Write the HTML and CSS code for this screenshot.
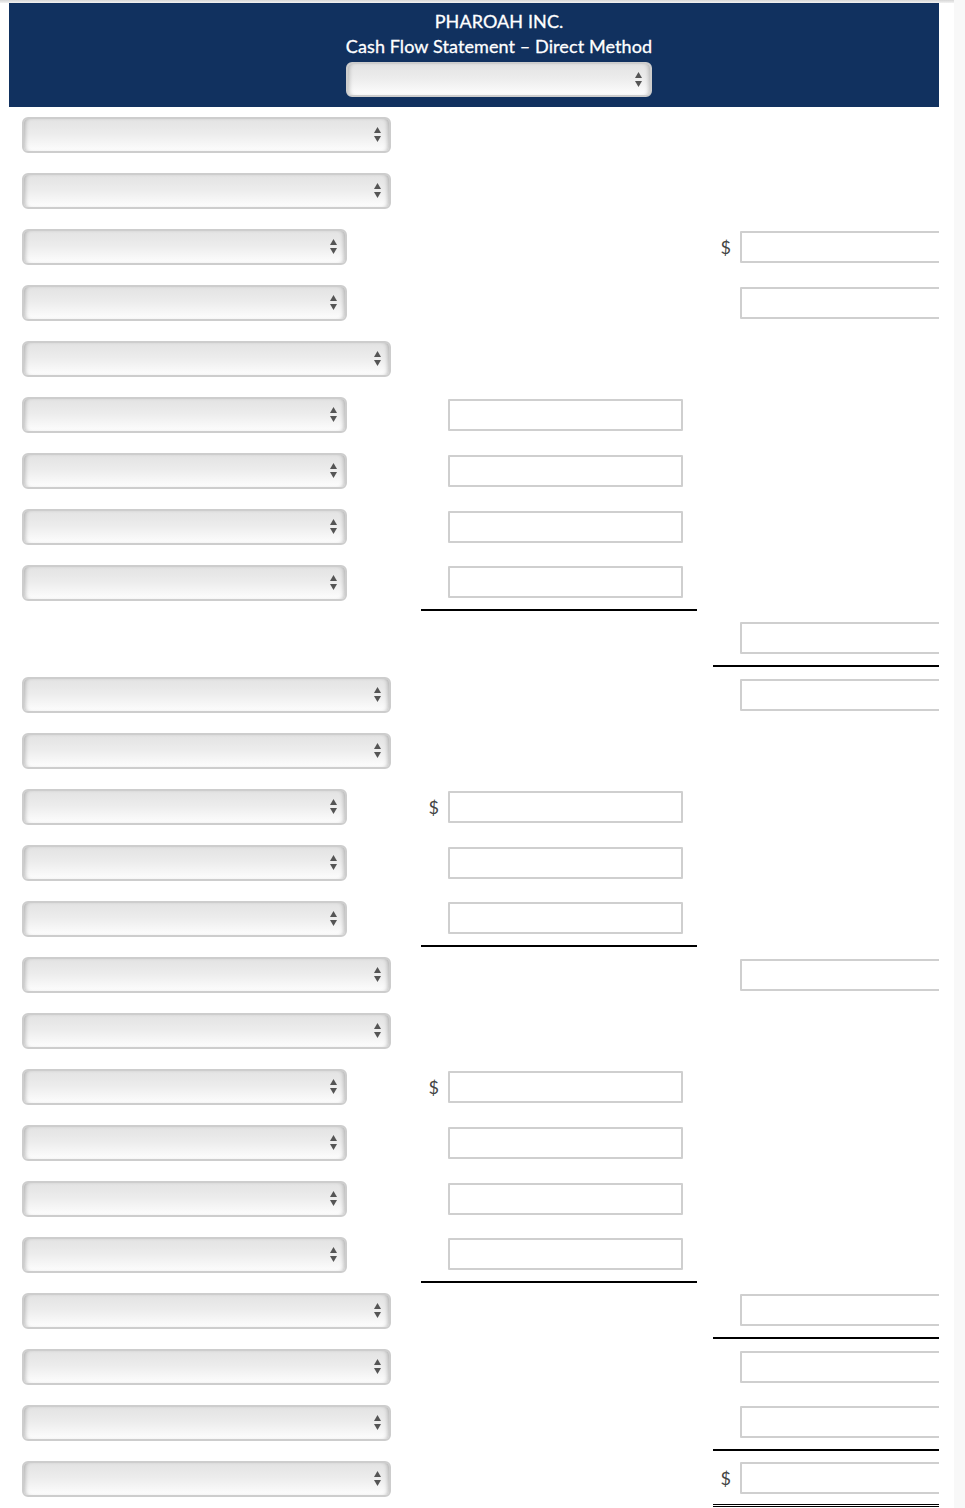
FILE: index.html
```html
<!DOCTYPE html>
<html>
<head>
	<title>Pharoah Inc. - Cash Flow Statement</title>
	<link rel="stylesheet" href="styles.css">
</head>
<body>
	<div class="shade"></div>

	<div class="sheet">

		<div class="head">
			<div class="title">PHAROAH INC.</div>
			<div class="title">Cash Flow Statement &ndash; Direct Method</div>
			<span class="pick pick-head">
				<select></select>
				<svg class="arrows" viewBox="0 0 7 15"><polygon points="0,6 3.5,0 7,6"/><polygon points="0,9 7,9 3.5,15"/></svg>
			</span>
		</div>

		<!-- operating activities -->
		<div class="row">
			<div class="lab"><span class="pick pick-long"><select></select><svg class="arrows" viewBox="0 0 7 15"><polygon points="0,6 3.5,0 7,6"/><polygon points="0,9 7,9 3.5,15"/></svg></span></div>
			<div class="mid"></div><div></div><div class="right"></div>
		</div>
		<div class="row">
			<div class="lab"><span class="pick pick-long"><select></select><svg class="arrows" viewBox="0 0 7 15"><polygon points="0,6 3.5,0 7,6"/><polygon points="0,9 7,9 3.5,15"/></svg></span></div>
			<div class="mid"></div><div></div><div class="right"></div>
		</div>
		<div class="row">
			<div class="lab"><span class="pick pick-short"><select></select><svg class="arrows" viewBox="0 0 7 15"><polygon points="0,6 3.5,0 7,6"/><polygon points="0,9 7,9 3.5,15"/></svg></span></div>
			<div class="mid"></div><div></div>
			<div class="right"><span class="cur">$</span><input type="text"></div>
		</div>
		<div class="row">
			<div class="lab"><span class="pick pick-short"><select></select><svg class="arrows" viewBox="0 0 7 15"><polygon points="0,6 3.5,0 7,6"/><polygon points="0,9 7,9 3.5,15"/></svg></span></div>
			<div class="mid"></div><div></div>
			<div class="right"><span class="cur"></span><input type="text"></div>
		</div>
		<div class="row">
			<div class="lab"><span class="pick pick-long"><select></select><svg class="arrows" viewBox="0 0 7 15"><polygon points="0,6 3.5,0 7,6"/><polygon points="0,9 7,9 3.5,15"/></svg></span></div>
			<div class="mid"></div><div></div><div class="right"></div>
		</div>
		<div class="row">
			<div class="lab"><span class="pick pick-short"><select></select><svg class="arrows" viewBox="0 0 7 15"><polygon points="0,6 3.5,0 7,6"/><polygon points="0,9 7,9 3.5,15"/></svg></span></div>
			<div class="mid"><span class="cur"></span><input type="text"></div><div></div><div class="right"></div>
		</div>
		<div class="row">
			<div class="lab"><span class="pick pick-short"><select></select><svg class="arrows" viewBox="0 0 7 15"><polygon points="0,6 3.5,0 7,6"/><polygon points="0,9 7,9 3.5,15"/></svg></span></div>
			<div class="mid"><span class="cur"></span><input type="text"></div><div></div><div class="right"></div>
		</div>
		<div class="row">
			<div class="lab"><span class="pick pick-short"><select></select><svg class="arrows" viewBox="0 0 7 15"><polygon points="0,6 3.5,0 7,6"/><polygon points="0,9 7,9 3.5,15"/></svg></span></div>
			<div class="mid"><span class="cur"></span><input type="text"></div><div></div><div class="right"></div>
		</div>
		<div class="row">
			<div class="lab"><span class="pick pick-short"><select></select><svg class="arrows" viewBox="0 0 7 15"><polygon points="0,6 3.5,0 7,6"/><polygon points="0,9 7,9 3.5,15"/></svg></span></div>
			<div class="mid rule"><span class="cur"></span><input type="text"></div><div></div><div class="right"></div>
		</div>
		<div class="row">
			<div class="lab"></div>
			<div class="mid"></div><div></div>
			<div class="right rule"><span class="cur"></span><input type="text"></div>
		</div>
		<div class="row">
			<div class="lab"><span class="pick pick-long"><select></select><svg class="arrows" viewBox="0 0 7 15"><polygon points="0,6 3.5,0 7,6"/><polygon points="0,9 7,9 3.5,15"/></svg></span></div>
			<div class="mid"></div><div></div>
			<div class="right"><span class="cur"></span><input type="text"></div>
		</div>

		<!-- investing activities -->
		<div class="row">
			<div class="lab"><span class="pick pick-long"><select></select><svg class="arrows" viewBox="0 0 7 15"><polygon points="0,6 3.5,0 7,6"/><polygon points="0,9 7,9 3.5,15"/></svg></span></div>
			<div class="mid"></div><div></div><div class="right"></div>
		</div>
		<div class="row">
			<div class="lab"><span class="pick pick-short"><select></select><svg class="arrows" viewBox="0 0 7 15"><polygon points="0,6 3.5,0 7,6"/><polygon points="0,9 7,9 3.5,15"/></svg></span></div>
			<div class="mid"><span class="cur">$</span><input type="text"></div><div></div><div class="right"></div>
		</div>
		<div class="row">
			<div class="lab"><span class="pick pick-short"><select></select><svg class="arrows" viewBox="0 0 7 15"><polygon points="0,6 3.5,0 7,6"/><polygon points="0,9 7,9 3.5,15"/></svg></span></div>
			<div class="mid"><span class="cur"></span><input type="text"></div><div></div><div class="right"></div>
		</div>
		<div class="row">
			<div class="lab"><span class="pick pick-short"><select></select><svg class="arrows" viewBox="0 0 7 15"><polygon points="0,6 3.5,0 7,6"/><polygon points="0,9 7,9 3.5,15"/></svg></span></div>
			<div class="mid rule"><span class="cur"></span><input type="text"></div><div></div><div class="right"></div>
		</div>
		<div class="row">
			<div class="lab"><span class="pick pick-long"><select></select><svg class="arrows" viewBox="0 0 7 15"><polygon points="0,6 3.5,0 7,6"/><polygon points="0,9 7,9 3.5,15"/></svg></span></div>
			<div class="mid"></div><div></div>
			<div class="right"><span class="cur"></span><input type="text"></div>
		</div>

		<!-- financing activities -->
		<div class="row">
			<div class="lab"><span class="pick pick-long"><select></select><svg class="arrows" viewBox="0 0 7 15"><polygon points="0,6 3.5,0 7,6"/><polygon points="0,9 7,9 3.5,15"/></svg></span></div>
			<div class="mid"></div><div></div><div class="right"></div>
		</div>
		<div class="row">
			<div class="lab"><span class="pick pick-short"><select></select><svg class="arrows" viewBox="0 0 7 15"><polygon points="0,6 3.5,0 7,6"/><polygon points="0,9 7,9 3.5,15"/></svg></span></div>
			<div class="mid"><span class="cur">$</span><input type="text"></div><div></div><div class="right"></div>
		</div>
		<div class="row">
			<div class="lab"><span class="pick pick-short"><select></select><svg class="arrows" viewBox="0 0 7 15"><polygon points="0,6 3.5,0 7,6"/><polygon points="0,9 7,9 3.5,15"/></svg></span></div>
			<div class="mid"><span class="cur"></span><input type="text"></div><div></div><div class="right"></div>
		</div>
		<div class="row">
			<div class="lab"><span class="pick pick-short"><select></select><svg class="arrows" viewBox="0 0 7 15"><polygon points="0,6 3.5,0 7,6"/><polygon points="0,9 7,9 3.5,15"/></svg></span></div>
			<div class="mid"><span class="cur"></span><input type="text"></div><div></div><div class="right"></div>
		</div>
		<div class="row">
			<div class="lab"><span class="pick pick-short"><select></select><svg class="arrows" viewBox="0 0 7 15"><polygon points="0,6 3.5,0 7,6"/><polygon points="0,9 7,9 3.5,15"/></svg></span></div>
			<div class="mid rule"><span class="cur"></span><input type="text"></div><div></div><div class="right"></div>
		</div>
		<div class="row">
			<div class="lab"><span class="pick pick-long"><select></select><svg class="arrows" viewBox="0 0 7 15"><polygon points="0,6 3.5,0 7,6"/><polygon points="0,9 7,9 3.5,15"/></svg></span></div>
			<div class="mid"></div><div></div>
			<div class="right rule"><span class="cur"></span><input type="text"></div>
		</div>

		<!-- totals -->
		<div class="row">
			<div class="lab"><span class="pick pick-long"><select></select><svg class="arrows" viewBox="0 0 7 15"><polygon points="0,6 3.5,0 7,6"/><polygon points="0,9 7,9 3.5,15"/></svg></span></div>
			<div class="mid"></div><div></div>
			<div class="right"><span class="cur"></span><input type="text"></div>
		</div>
		<div class="row">
			<div class="lab"><span class="pick pick-long"><select></select><svg class="arrows" viewBox="0 0 7 15"><polygon points="0,6 3.5,0 7,6"/><polygon points="0,9 7,9 3.5,15"/></svg></span></div>
			<div class="mid"></div><div></div>
			<div class="right rule"><span class="cur"></span><input type="text"></div>
		</div>
		<div class="row">
			<div class="lab"><span class="pick pick-long"><select></select><svg class="arrows" viewBox="0 0 7 15"><polygon points="0,6 3.5,0 7,6"/><polygon points="0,9 7,9 3.5,15"/></svg></span></div>
			<div class="mid"></div><div></div>
			<div class="right double"><span class="cur">$</span><input type="text"></div>
		</div>

	</div>
</body>
</html>
```

FILE: styles.css
```css
html {
	background: linear-gradient(to right, #ffffff 954px, #f8f8f8 954px);
}

body {
	margin: 0;
	font-family: Lato, "Liberation Sans", sans-serif;
	font-size: 17px;
	color: #333;
}

.shade {
	height: 3px;
	width: 954px;
	background: linear-gradient(#d6d6d6, #f2f2f2);
}

.sheet {
	width: 930px;
	margin-left: 9px;
	overflow: hidden;
}

.head {
	height: 104px;
	box-sizing: border-box;
	padding: 6px 0 10px 50px;
	background-color: #11315f;
	color: #fff;
	text-align: center;
}

.title {
	font-size: 18px;
	line-height: 25px;
	letter-spacing: 0.1px;
	-webkit-text-stroke: 0.3px #fff;
}

/* drop-down boxes */
.pick {
	position: relative;
	display: inline-block;
	height: 36px;
	vertical-align: top;
}

.pick select {
	appearance: none;
	-webkit-appearance: none;
	display: block;
	width: 100%;
	height: 100%;
	margin: 0;
	border: 2px solid #cdcdcd;
	border-radius: 6px;
	background: linear-gradient(#e3e3e3, #ececec 45%, #fdfdfd);
	box-shadow: inset 4px 0 4px -3px rgba(0, 0, 0, 0.25), inset -4px 0 4px -3px rgba(0, 0, 0, 0.25);
}

.pick .arrows {
	position: absolute;
	right: 10px;
	top: 10px;
	width: 7px;
	height: 15px;
	fill: #555;
}

.pick-head {
	width: 306px;
	margin-top: 3px;
	height: 35px;
}

.pick-long {
	width: 369px;
}

.pick-short {
	width: 325px;
}

/* statement rows */
.row {
	display: grid;
	grid-template-columns: 412px 276px 16px 226px;
	height: 56px;
}

.lab {
	display: flex;
	align-items: center;
	padding-left: 13px;
}

.mid, .right {
	display: flex;
	align-items: center;
	box-sizing: border-box;
	overflow: hidden;
}

.cur {
	flex: none;
	width: 27px;
	padding-right: 9px;
	box-sizing: border-box;
	text-align: right;
	font-size: 18px;
	color: #444;
}

.row input {
	flex: none;
	width: 235px;
	height: 32px;
	margin: 0;
	box-sizing: border-box;
	border: 2px solid #cfcfcf;
	border-radius: 1px;
	background: #fff;
}

.rule {
	border-bottom: 2px solid #000;
}

.double {
	border-bottom: 3px double #000;
}
```
